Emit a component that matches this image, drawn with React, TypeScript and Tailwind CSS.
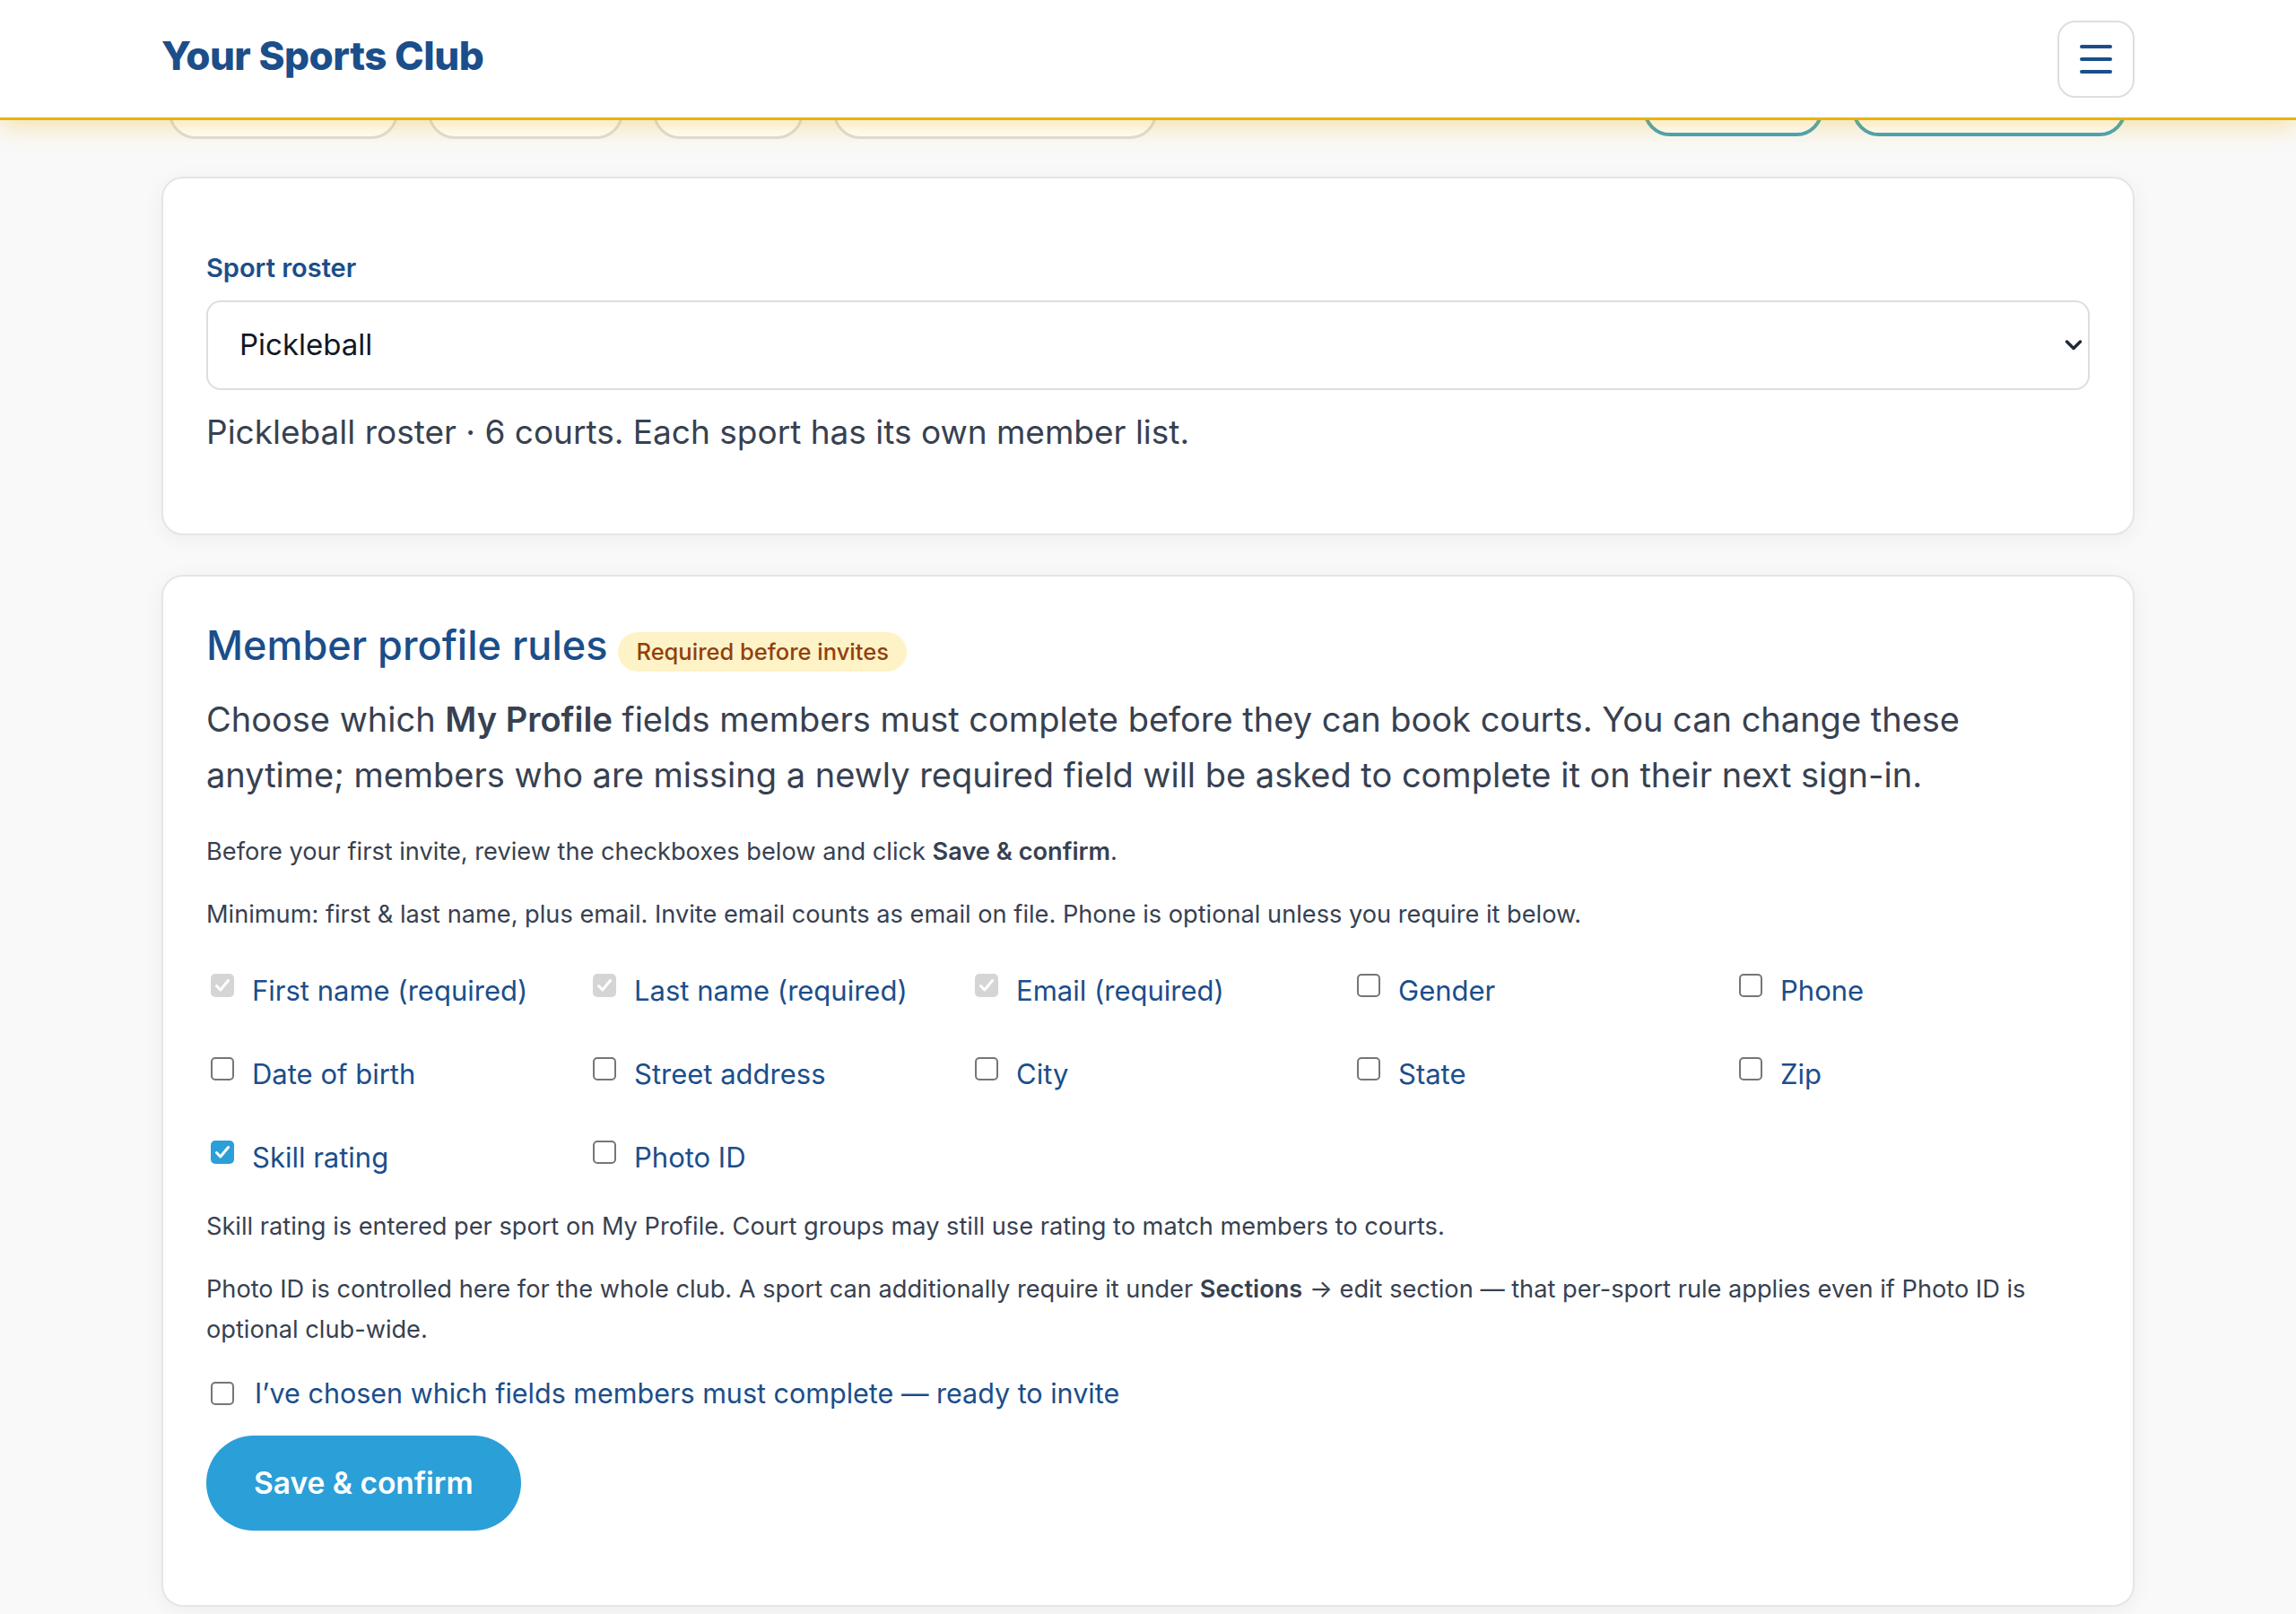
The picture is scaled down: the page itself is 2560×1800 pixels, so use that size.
import React from "react";

type BoxState = "off" | "on" | "locked";

function Box({ state, className = "" }: { state: BoxState; className?: string }) {
  if (state === "off") {
    return (
      <span
        className={`block h-[26px] w-[26px] shrink-0 rounded-[5px] border-2 border-[#767676] bg-white ${className}`}
      />
    );
  }
  const bg = state === "on" ? "bg-[#2b9fd8]" : "bg-[#d5d5d5]";
  return (
    <span className={`flex h-[26px] w-[26px] shrink-0 items-center justify-center rounded-[5px] ${bg} ${className}`}>
      <svg width="26" height="26" viewBox="0 0 26 26" fill="none">
        <path d="M6.5 13.5 L10.8 18 L19.5 7.5" stroke="white" strokeWidth="3" strokeLinecap="round" strokeLinejoin="round" />
      </svg>
    </span>
  );
}

const fields: { label: string; state: BoxState }[] = [
  { label: "First name (required)", state: "locked" },
  { label: "Last name (required)", state: "locked" },
  { label: "Email (required)", state: "locked" },
  { label: "Gender", state: "off" },
  { label: "Phone", state: "off" },
  { label: "Date of birth", state: "off" },
  { label: "Street address", state: "off" },
  { label: "City", state: "off" },
  { label: "State", state: "off" },
  { label: "Zip", state: "off" },
  { label: "Skill rating", state: "on" },
  { label: "Photo ID", state: "off" },
];

export default function App() {
  return (
    <div className="min-h-screen bg-[#f9f9f9] font-['Inter',sans-serif] text-[#374151]">
      <header className="sticky top-0 z-20 h-[134px] border-b-[3px] border-[#eab308] bg-white shadow-[0_6px_26px_rgba(234,179,8,0.35)]">
        <div className="mx-auto flex h-full max-w-[2200px] items-center justify-between">
          <span className="mb-[8px] text-[44px] font-extrabold tracking-[-0.5px] text-[#1b4e8a]">Your Sports Club</span>
          <button className="flex h-[86px] w-[86px] flex-col items-center justify-center gap-[10px] rounded-[20px] border-2 border-[#dedede] bg-white">
            <span className="block h-[4px] w-[36px] rounded-full bg-[#1b4e8a]" />
            <span className="block h-[4px] w-[36px] rounded-full bg-[#1b4e8a]" />
            <span className="block h-[4px] w-[36px] rounded-full bg-[#1b4e8a]" />
          </button>
        </div>
      </header>

      {/* section tabs, scrolled under the sticky header */}
      <nav className="mx-auto -mt-[39px] flex h-[60px] max-w-[2200px] items-end justify-between">
        <div className="ml-[8px] flex gap-[33px]">
          <div className="h-[60px] w-[256px] rounded-full border-[3px] border-[#dcdcdc] bg-white" />
          <div className="h-[60px] w-[218px] rounded-full border-[3px] border-[#dcdcdc] bg-white" />
          <div className="h-[60px] w-[168px] rounded-full border-[3px] border-[#dcdcdc] bg-white" />
          <div className="h-[60px] w-[361px] rounded-full border-[3px] border-[#dcdcdc] bg-white" />
        </div>
        <div className="mr-[9px] mb-[3px] flex gap-[32px]">
          <div className="h-[60px] w-[201px] rounded-full border-[4px] border-[#3fa1bd] bg-white" />
          <div className="h-[60px] w-[306px] rounded-full border-[4px] border-[#3fa1bd] bg-white" />
        </div>
      </nav>

      <main className="mx-auto mt-[42px] max-w-[2200px] space-y-[44px] pb-[60px]">
        <section className="rounded-[24px] border-2 border-[#e5e5e5] bg-white px-[48px] pt-[79px] pb-[86px] shadow-[0_4px_24px_rgba(0,0,0,0.05)]">
          <label className="mb-[15px] block text-[29px] font-semibold leading-[42px] text-[#1b4e8a]">Sport roster</label>
          <div className="relative">
            <select className="h-[100px] w-full appearance-none rounded-[16px] border-2 border-[#dedede] bg-white pl-[35px] text-[33px] text-[#111827] outline-none">
              <option>Pickleball</option>
            </select>
            <svg
              className="pointer-events-none absolute right-[8px] top-1/2 -translate-y-1/2"
              width="20"
              height="13"
              viewBox="0 0 20 13"
              fill="none"
            >
              <path d="M2.5 2.5 L10 10 L17.5 2.5" stroke="#1f2937" strokeWidth="3.5" strokeLinecap="round" strokeLinejoin="round" />
            </svg>
          </div>
          <p className="mt-[20px] text-[37px] leading-[54px] text-[#374151]">
            Pickleball roster · 6 courts. Each sport has its own member list.
          </p>
        </section>

        <section className="rounded-[24px] border-2 border-[#e5e5e5] bg-white px-[48px] pt-[48px] pb-[83px] shadow-[0_4px_24px_rgba(0,0,0,0.05)]">
          <div className="flex items-baseline gap-[12px]">
            <h2 className="text-[45px] font-medium leading-[57px] text-[#1b4e8a]">Member profile rules</h2>
            <span className="rounded-full bg-[#fef3c7] px-[20px] text-[25.5px] font-medium leading-[44px] text-[#92400e]">
              Required before invites
            </span>
          </div>

          <p className="mt-[22px] text-[38px] leading-[62px]">
            Choose which <strong className="font-semibold">My Profile</strong> fields members must complete before they
            can book courts. You can change these
            <br />
            anytime; members who are missing a newly required field will be asked to complete it on their next sign-in.
          </p>

          <p className="mt-[32px] text-[27.2px] leading-[45px]">
            Before your first invite, review the checkboxes below and click <strong className="font-semibold">Save &amp; confirm</strong>.
          </p>
          <p className="mt-[25px] text-[27.2px] leading-[45px]">
            Minimum: first &amp; last name, plus email. Invite email counts as email on file. Phone is optional unless you
            require it below.
          </p>

          <div className="mt-[40px] grid grid-cols-5 gap-x-[30px] gap-y-[48px]">
            {fields.map((f) => (
              <label key={f.label} className="flex items-start gap-[20px] pl-[5px]">
                <Box state={f.state} className="mt-[4px]" />
                <span className="text-[31px] leading-[45px] text-[#1b4e8a]">{f.label}</span>
              </label>
            ))}
          </div>

          <p className="mt-[32px] text-[27.2px] leading-[45px]">
            Skill rating is entered per sport on My Profile. Court groups may still use rating to match members to courts.
          </p>
          <p className="mt-[25px] text-[27.2px] leading-[45px]">
            Photo ID is controlled here for the whole club. A sport can additionally require it under{" "}
            <strong className="font-semibold">Sections</strong> → edit section — that per-sport rule applies even if Photo ID is
            <br />
            optional club-wide.
          </p>

          <label className="mt-[26px] flex items-center gap-[23px] pl-[5px]">
            <Box state="off" />
            <span className="text-[30.5px] leading-[45px] text-[#1b4e8a]">
              I’ve chosen which fields members must complete — ready to invite
            </span>
          </label>

          <div className="mt-[25px]">
            <button className="h-[106px] rounded-full bg-[#2b9fd8] px-[53px] text-[33.5px] font-semibold text-white">
              Save &amp; confirm
            </button>
          </div>
        </section>
      </main>
    </div>
  );
}
